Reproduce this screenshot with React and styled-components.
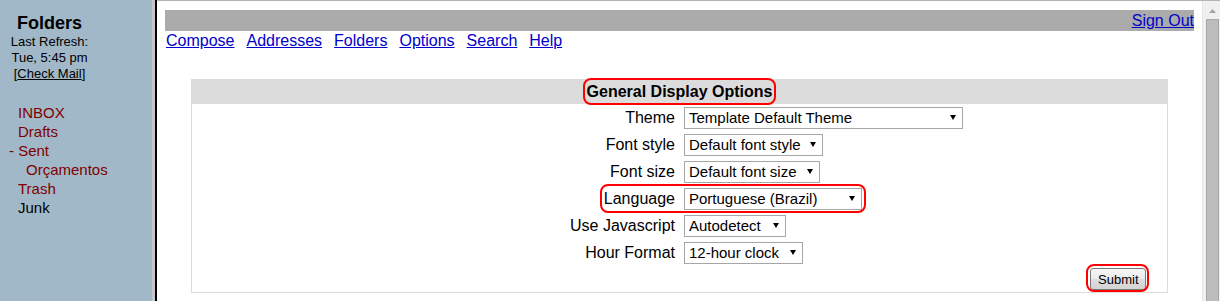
import React from "react";
import styled, { createGlobalStyle } from "styled-components";

const GlobalStyle = createGlobalStyle`
  html, body { margin: 0; padding: 0; overflow: hidden; background: #fff; }
  body { font-family: "Liberation Sans", Arial, sans-serif; color: #000; }
  * { box-sizing: border-box; }
`;

const Page = styled.div`
  display: flex;
  width: 1220px;
  height: 301px;
  overflow: hidden;
`;

const Sidebar = styled.aside`
  width: 152px;
  flex: none;
  background: #a1b8c8;
  padding-top: 13px;
`;

const SidebarHead = styled.div`
  width: 99px;
  text-align: center;
`;

const SidebarTitle = styled.div`
  font-size: 18px;
  font-weight: bold;
  line-height: 20px;
`;

const RefreshInfo = styled.div`
  margin-top: 1px;
  font-size: 13px;
  line-height: 16px;
`;

const CheckLink = styled.a`
  color: #000;
  text-decoration: underline;
`;

const FolderList = styled.ul`
  list-style: none;
  margin: 21px 0 0;
  padding: 0 0 0 18px;
  font-size: 15px;
  line-height: 19px;
`;

const FolderItem = styled.li`
  padding-left: ${(p) => p.$level * 8}px;
  color: ${(p) => (p.$muted ? "#000" : "#800000")};
  white-space: nowrap;
`;

const Collapse = styled.span`
  margin-left: -9px;
`;

const Divider = styled.div`
  flex: none;
  width: 5px;
  background: #c6c6c6;
  border-right: 2px solid #000;
`;

const MainFrame = styled.div`
  flex: 1;
  display: flex;
  border-top: 1px solid #b4b4b4;
  min-width: 0;
`;

const Content = styled.main`
  flex: 1;
  padding: 9px 8px 0 8px;
  min-width: 0;
`;

const TopBar = styled.div`
  height: 21px;
  background: #ababab;
  display: flex;
  align-items: center;
  justify-content: flex-end;
  font-size: 16px;
`;

const Link = styled.a`
  color: #0000cc;
  text-decoration: underline;
  font-size: 16px;
`;

const Nav = styled.nav`
  display: flex;
  gap: 12px;
  height: 20px;
  line-height: 20px;
  padding-left: 1px;
`;

const OptionsBox = styled.section`
  width: 95%;
  margin: 28px auto 0;
`;

const BoxHeader = styled.div`
  height: 25px;
  background: #dcdcdc;
  display: flex;
  align-items: center;
  justify-content: center;
`;

const BoxTitle = styled.span`
  position: relative;
  font-size: 16px;
  font-weight: bold;
  line-height: 18px;
`;

const Ring = styled.span`
  position: absolute;
  top: ${(p) => p.$top}px;
  bottom: ${(p) => p.$bottom}px;
  left: ${(p) => p.$left};
  width: ${(p) => p.$width};
  right: ${(p) => p.$right};
  border: 2px solid #ff0000;
  border-radius: 8px;
  pointer-events: none;
`;

const BoxBody = styled.div`
  border: 1px solid #dcdcdc;
  border-top: none;
`;

const Row = styled.div`
  position: relative;
  display: grid;
  grid-template-columns: 1fr 1fr;
  column-gap: 9px;
  align-items: center;
  height: 27px;
`;

const Label = styled.span`
  text-align: right;
  font-size: 16px;
`;

const SelectBox = styled.div`
  display: flex;
  align-items: center;
  justify-content: space-between;
  width: ${(p) => p.$width}px;
  height: 22px;
  border: 1px solid #a6a6a6;
  background: #fff;
  padding: 0 6px 0 4px;
  font-size: 15px;
  white-space: nowrap;
`;

const SubmitRow = styled.div`
  display: flex;
  justify-content: flex-end;
  padding: 2px 21px 2px 0;
`;

const ButtonWrap = styled.span`
  position: relative;
  display: inline-flex;
`;

const Button = styled.button`
  width: 56px;
  height: 22px;
  padding: 0;
  border: 1px solid #7a7a7a;
  border-radius: 3px;
  background: linear-gradient(#f6f6f6, #ebebeb 50%, #dedede 50%, #d4d4d4);
  font-family: "Liberation Sans", Arial, sans-serif;
  font-size: 13px;
  color: #000;
`;

const Scrollbar = styled.div`
  flex: none;
  width: 18px;
  background: #f0f0f0;
  border-left: 1px solid #e6e6e6;
  display: flex;
  flex-direction: column;
  align-items: center;
  padding-top: 8px;
`;

const ScrollArrow = styled.svg`
  display: block;
  margin-left: 1px;
`;

const ScrollThumb = styled.div`
  width: 13px;
  flex: 1;
  margin-top: 6px;
  margin-left: 1px;
  background: #bcbcbc;
  border: 1px solid #a8a8a8;
  border-bottom: none;
`;

const Arrow = () => (
  <svg width="6" height="5" viewBox="0 0 6 5">
    <polygon points="0,0 6,0 3,5" fill="#000" />
  </svg>
);

const Select = ({ value, width }) => (
  <div>
    <SelectBox $width={width}>
      <span>{value}</span>
      <Arrow />
    </SelectBox>
  </div>
);

const options = [
  { label: "Theme", value: "Template Default Theme", width: 279 },
  { label: "Font style", value: "Default font style", width: 139 },
  { label: "Font size", value: "Default font size", width: 136 },
  { label: "Language", value: "Portuguese (Brazil)", width: 178, ring: true },
  { label: "Use Javascript", value: "Autodetect", width: 102 },
  { label: "Hour Format", value: "12-hour clock", width: 119 },
];

const folders = [
  { name: "INBOX", level: 0 },
  { name: "Drafts", level: 0 },
  { name: "Sent", level: 0, open: true },
  { name: "Orçamentos", level: 1 },
  { name: "Trash", level: 0 },
  { name: "Junk", level: 0, muted: true },
];

export default function App() {
  return (
    <>
      <GlobalStyle />
      <Page>
        <Sidebar>
          <SidebarHead>
            <SidebarTitle>Folders</SidebarTitle>
            <RefreshInfo>
              Last Refresh:
              <br />
              Tue, 5:45 pm
              <br />
              [<CheckLink href="#">Check Mail</CheckLink>]
            </RefreshInfo>
          </SidebarHead>
          <FolderList>
            {folders.map((f) => (
              <FolderItem key={f.name} $level={f.level} $muted={f.muted}>
                {f.open && <Collapse>-&nbsp;</Collapse>}
                {f.name}
              </FolderItem>
            ))}
          </FolderList>
        </Sidebar>
        <Divider />
        <MainFrame>
          <Content>
            <TopBar>
              <Link href="#">Sign Out</Link>
            </TopBar>
            <Nav>
              {["Compose", "Addresses", "Folders", "Options", "Search", "Help"].map((n) => (
                <Link key={n} href="#">
                  {n}
                </Link>
              ))}
            </Nav>
            <OptionsBox>
              <BoxHeader>
                <BoxTitle>
                  General Display Options
                  <Ring $top={-5} $bottom={-4} $left="-4px" $right="-4px" />
                </BoxTitle>
              </BoxHeader>
              <BoxBody>
                {options.map((o) => (
                  <Row key={o.label}>
                    <Label>{o.label}</Label>
                    <Select value={o.value} width={o.width} />
                    {o.ring && (
                      <Ring $top={-1} $bottom={-1} $left="calc(50% - 79px)" $width="266px" />
                    )}
                  </Row>
                ))}
                <SubmitRow>
                  <ButtonWrap>
                    <Button type="button">Submit</Button>
                    <Ring $top={-4} $bottom={-2} $left="-4px" $right="-3px" />
                  </ButtonWrap>
                </SubmitRow>
              </BoxBody>
            </OptionsBox>
          </Content>
          <Scrollbar>
            <ScrollArrow width="7" height="4" viewBox="0 0 7 4">
              <polygon points="0,4 7,4 3.5,0" fill="#a3a3a3" />
            </ScrollArrow>
            <ScrollThumb />
          </Scrollbar>
        </MainFrame>
      </Page>
    </>
  );
}
